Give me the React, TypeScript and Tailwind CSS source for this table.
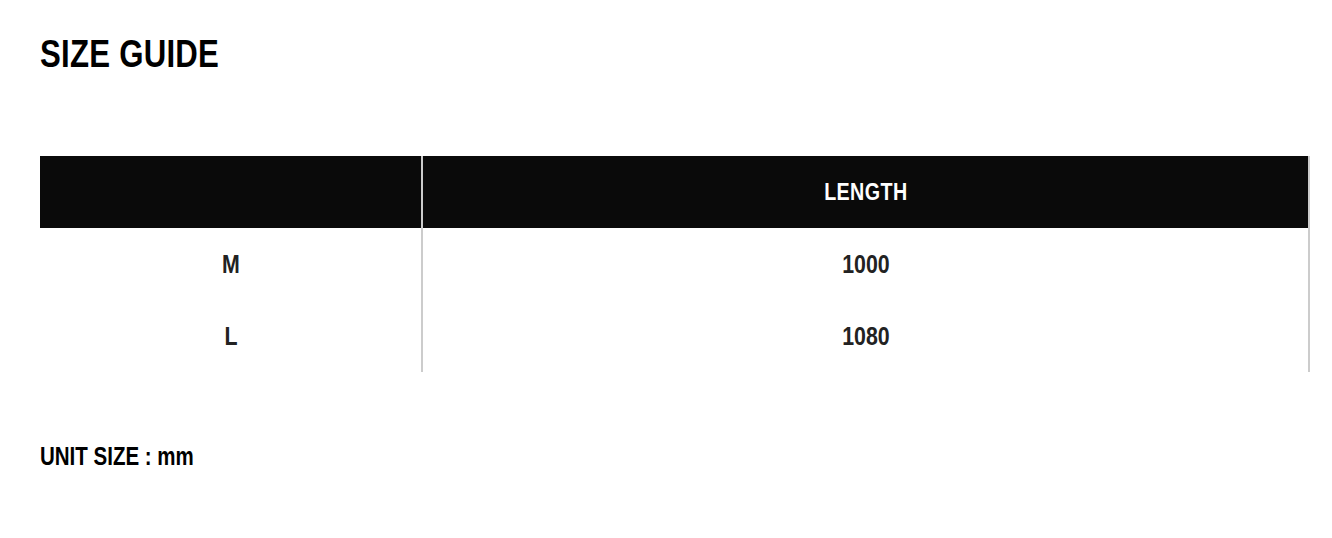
// Arial Narrow is Arial at ~82% width, so Liberation Sans is squeezed the same way
const font = "font-['Liberation_Sans',Arial,sans-serif]";
const narrow = "inline-block scale-x-[0.82]";

const rows = [
  { size: "M", length: "1000" },
  { size: "L", length: "1080" },
];

export default function App() {
  return (
    <div className={`min-h-[538px] w-[1332px] bg-white pl-10 pt-[30px] text-[#222] ${font}`}>
      <h1 className="text-[38px] font-bold leading-[48px] tracking-[0.3px] text-black">
        <span className={`${narrow} origin-left`}>SIZE GUIDE</span>
      </h1>

      <table className="mt-[78px] w-[1270px] table-fixed border-separate border-spacing-0">
        <colgroup>
          <col className="w-[383px]" />
          <col />
        </colgroup>
        <thead>
          <tr className="h-[72px] bg-[#0a0a0a] text-white">
            <th className="border-r-2 border-[#cccccc] p-0"></th>
            <th className="border-r-2 border-[#cccccc] p-0 text-[24px] font-bold tracking-[0.5px]">
              <span className={narrow}>LENGTH</span>
            </th>
          </tr>
        </thead>
        <tbody>
          {rows.map((r) => (
            <tr key={r.size} className="h-[72px] text-[26px] font-bold">
              <td className="border-r-2 border-[#cccccc] p-0 text-center">
                <span className={narrow}>{r.size}</span>
              </td>
              <td className="border-r-2 border-[#cccccc] p-0 text-center">
                <span className={narrow}>{r.length}</span>
              </td>
            </tr>
          ))}
        </tbody>
      </table>

      <p className="mt-[69px] text-[25px] font-bold leading-[30px] text-black">
        <span className={`${narrow} origin-left`}>UNIT SIZE : mm</span>
      </p>
    </div>
  );
}
